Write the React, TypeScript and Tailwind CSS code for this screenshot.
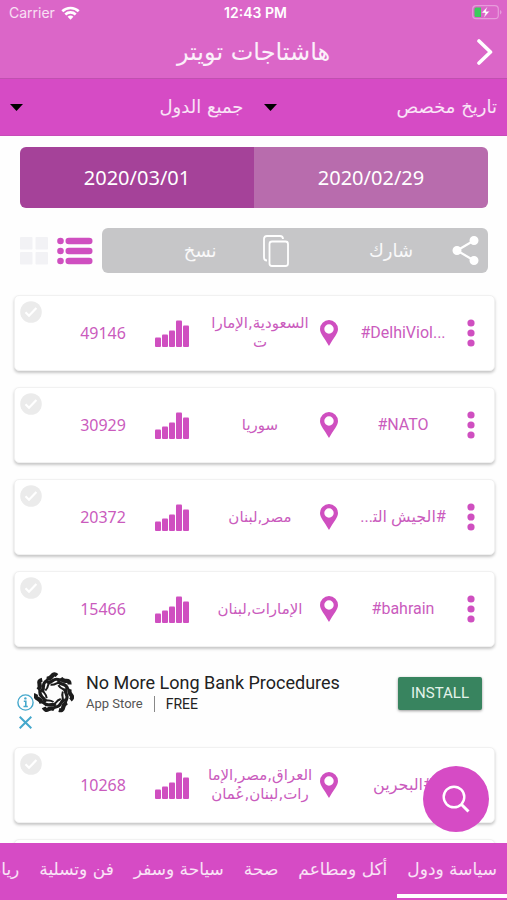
import React, { useState } from "react";

const arabic = "font-['DejaVu_Sans',sans-serif]";

const cardFrame = "h-[76px] rounded-[5px] border border-[#f1f1f1] bg-white shadow-[0_2px_3px_rgba(0,0,0,0.22)]";

type Hashtag = { tag: string; countries: string; count: string };

const beforeAd: Hashtag[] = [
  { tag: "#DelhiViol...", countries: "السعودية,الإمارا\nت", count: "49146" },
  { tag: "#NATO", countries: "سوريا", count: "30929" },
  { tag: "#الجيش الت\u200d...", countries: "مصر,لبنان", count: "20372" },
  { tag: "#bahrain", countries: "الإمارات,لبنان", count: "15466" },
];

const afterAd: Hashtag[] = [
  { tag: "#البحرين", countries: "العراق,مصر,الإما\nرات,لبنان,عُمان", count: "10268" },
];

const categories = ["سياسة ودول", "أكل ومطاعم", "صحة", "سياحة وسفر", "فن وتسلية", "رياضة"];

function StatusBar() {
  return (
    <div dir="ltr" className="grid h-[25px] grid-cols-3 items-center pl-[9px] pr-[5px] font-[Inter,sans-serif] text-sm text-white">
      <span className="flex items-center gap-[6px] text-white/80">
        Carrier
        <svg width="19" height="14" viewBox="0 0 19 14" fill="none" stroke="#fff" strokeWidth="2.6">
          <path d="M1.3 5.3C5.8.9 13.200.9 17.700 5.300" />
          <path d="M4.300 8.500c2.900-2.800 7.500-2.800 10.400 0" />
          <path d="M6.600 10.700c1.700-1.500 4.100-1.500 5.800 0L9.500 13.800z" fill="#fff" stroke="none" />
        </svg>
      </span>
      <span className="text-center text-sm font-semibold whitespace-nowrap">12:43 PM</span>
      <svg className="justify-self-end" width="30" height="15" viewBox="0 0 30 15">
        <rect x="0.700" y="0.700" width="25.600" height="13" rx="3.500" fill="none" stroke="#fff" strokeOpacity=".35" strokeWidth="1.200" />
        <path d="M28 5v4.500c2-.8 2-3.700 0-4.500z" fill="#fff" fillOpacity=".35" />
        <path d="M4 2.500h5v9.500H4a1.500 1.500 0 0 1-1.500-1.500V4A1.500 1.500 0 0 1 4 2.500z" fill="#3ccb5c" />
        <path d="M15.500 1.500L9.500 8h3.700l-1.500 5 6-6.700h-3.700z" fill="#fff" stroke="#db66c8" strokeWidth=".5" />
      </svg>
    </div>
  );
}

function Dropdown({ label, value }: { label: string; value: string }) {
  return (
    <label className="flex flex-1 items-center px-[10px]">
      <select
        aria-label={label}
        className="h-[56px] min-w-0 flex-1 appearance-none bg-transparent text-lg text-white/85 outline-none"
      >
        <option>{value}</option>
      </select>
      <svg width="13" height="7" viewBox="0 0 13 7" className="shrink-0">
        <path d="M0 0h13L6.500 7z" fill="#000" />
      </svg>
    </label>
  );
}

function CheckCircle({ label }: { label: string }) {
  return (
    <label className="mt-[5px] mr-auto ml-[5px] block self-start">
      <input type="checkbox" aria-label={label} className="peer sr-only" />
      <svg width="22" height="22" viewBox="0 0 22 22" className="text-[#ebebeb] peer-checked:text-[#d64bc5]">
        <circle cx="11" cy="11" r="10.800" fill="currentColor" />
        <path d="M5.500 11.300l3.500 3.400 7.400-7.600" fill="none" stroke="#fff" strokeWidth="2.200" />
      </svg>
    </label>
  );
}

function HashtagCard({ item }: { item: Hashtag }) {
  return (
    <li
      className={`grid grid-cols-[46px_minmax(0,100fr)_38px_minmax(0,100fr)_76px_minmax(0,62fr)_57px] items-center justify-items-center text-[#ca5bbd] ${cardFrame}`}
    >
      <button aria-label="المزيد" className="p-2">
        <svg width="8" height="28" viewBox="0 0 8 28" fill="#cf4fc0">
          <circle cx="4" cy="4" r="3.600" />
          <circle cx="4" cy="14" r="3.600" />
          <circle cx="4" cy="24" r="3.600" />
        </svg>
      </button>
      <span dir="auto" className="w-full pl-[10px] text-center font-[Roboto,'DejaVu_Sans',sans-serif] text-base whitespace-nowrap">
        {item.tag}
      </span>
      <svg width="18" height="26" viewBox="0 0 18 26" fill="#cf4fc0">
        <path fillRule="evenodd" d="M9 0a9 9 0 0 1 9 9c0 4.500-4.500 9-9 17C4.500 18 0 13.500 0 9a9 9 0 0 1 9-9zm0 4.300a4.700 4.700 0 1 0 0 9.400 4.700 4.700 0 0 0 0-9.400z" />
      </svg>
      <span className="text-center text-[15px] leading-[19px] whitespace-pre">{item.countries}</span>
      <svg width="34" height="27" viewBox="0 0 34 27" fill="#cf4fc0">
        <rect x="0" y="17.500" width="6" height="9.500" rx="1" />
        <rect x="7" y="14.500" width="6" height="12.500" rx="1" />
        <rect x="14" y="10.500" width="6" height="16.500" rx="1" />
        <rect x="21" y="0.500" width="6" height="26.500" rx="1" />
        <rect x="28" y="5.500" width="6" height="21.500" rx="1" />
      </svg>
      <span className="font-['Noto_Sans',sans-serif] text-base">{item.count}</span>
      <CheckCircle label={item.tag} />
    </li>
  );
}

function AdBanner() {
  return (
    <li dir="ltr" className="-my-4 flex h-[100px] items-center pr-[13px] pb-[8px] pl-[3px]">
      <div className="flex w-[17px] flex-col items-center gap-[5px] self-end pb-[10px]">
        <button aria-label="Ad information" className="block">
          <svg width="17" height="17" viewBox="0 0 17 17" fill="none" stroke="#45a8cc">
            <circle cx="8.500" cy="8.500" r="7.600" strokeWidth="1.400" />
            <path d="M6.800 7.200h2v5M6.500 12.500h4.300" strokeWidth="1.600" />
            <circle cx="8.400" cy="4.400" r="1.200" fill="#45a8cc" stroke="none" />
          </svg>
        </button>
        <button aria-label="Close ad" className="block">
          <svg width="13" height="13" viewBox="0 0 13 13" stroke="#45a8cc" strokeWidth="2">
            <path d="M.7.7l11.600 11.600M12.300.7L.7 12.300" />
          </svg>
        </button>
      </div>
      <svg width="40" height="42" viewBox="-20 -21 40 42" fill="none" stroke="#1c1c1c">
        {[0, 51.43, 102.86, 154.29, 205.71, 257.14, 308.57].map((a) => (
          <g key={a} transform={`rotate(${a})`}>
            <path d="M-7.500 -14.500Q-4 -14 -2 -17T3 -17.500" strokeWidth="4.200" />
            <path d="M-7 -10.800Q-3.500 -10.500 -1 -12.600T6 -13" strokeWidth="3.200" />
            <path d="M-3.500 -8.300Q0 -8 2 -9.300T7.500 -9" strokeWidth="2" />
          </g>
        ))}
      </svg>
      <div className="ml-[12px] flex-1 font-[Roboto,sans-serif] whitespace-nowrap text-[#222]">
        <p className="text-lg leading-[22px]">No More Long Bank Procedures</p>
        <p className="flex items-center text-sm leading-5">
          <span className="text-[13px] text-[#555]">App Store</span>
          <span className="mx-[11px] h-4 w-px bg-[#888]" />
          FREE
        </p>
      </div>
      <button className="h-[33px] w-[84px] rounded-[2px] bg-[#38845f] font-[Roboto,sans-serif] text-[15px] text-[#e3f3ea] shadow-[0_1px_3px_rgba(0,0,0,0.4)]">
        INSTALL
      </button>
    </li>
  );
}

export default function App() {
  const [date, setDate] = useState("2020/03/01");
  const [category, setCategory] = useState(categories[0]);

  return (
    <div dir="rtl" lang="ar" className={`relative flex h-screen flex-col overflow-hidden bg-[#fefefe] ${arabic}`}>
      <header className="shrink-0">
        <div className="border-b border-[#c050b0] bg-[#db66c8]">
          <StatusBar />
          <div className="grid h-[53px] grid-cols-[40px_1fr_40px] items-center">
            <button aria-label="رجوع" className="justify-self-start pr-[14px]">
              <svg width="16" height="26" viewBox="0 0 16 26" fill="none" stroke="#fff" strokeWidth="3.600" strokeLinecap="round" strokeLinejoin="round">
                <path d="M2 2l11.500 11L2 24" />
              </svg>
            </button>
            <h1 className="text-center text-2xl text-white/90">هاشتاجات تويتر</h1>
          </div>
        </div>
        <div className="flex border-b border-[#c84bb8] bg-[#d64bc5]">
          <Dropdown label="التاريخ" value="تاريخ مخصص" />
          <Dropdown label="الدولة" value="جميع الدول" />
        </div>
      </header>

      <main className="min-h-0 flex-1 overflow-y-auto [scrollbar-width:none]">
        <div className="mr-[19px] ml-5 mt-[11px] flex h-[61px] overflow-hidden rounded-[6px] font-['Noto_Sans',sans-serif] text-xl text-white">
          {["2020/02/29", "2020/03/01"].map((d) => (
            <button
              key={d}
              onClick={() => setDate(d)}
              className={`flex-1 ${date === d ? "bg-[#a54299]" : "bg-[#b86cad]"}`}
            >
              {d}
            </button>
          ))}
        </div>

        <div className="mr-[19px] ml-5 mt-5 flex items-center">
          <div className="flex h-[45px] flex-1 items-center rounded-[6px] bg-[#c6c6c8] text-lg text-white/90">
            <button className="flex flex-1 items-center pr-[9px]">
              <svg width="27" height="29" viewBox="0 0 27 29" fill="#fff" stroke="#fff" strokeWidth="2.200">
                <path d="M22 4.500L5 14.500l17 10" fill="none" />
                <circle cx="22" cy="4.500" r="3.400" />
                <circle cx="5" cy="14.500" r="3.400" />
                <circle cx="22" cy="24.500" r="3.400" />
              </svg>
              <span className="pr-[39px]">شارك</span>
            </button>
            <button className="flex flex-1 items-center pr-[4px]">
              <svg width="26" height="32" viewBox="0 0 26 32" fill="none" stroke="#fff" strokeWidth="1.800">
                <rect x="6.500" y="6.500" width="18.500" height="24.500" rx="2.500" />
                <path d="M4 25.500q-3 0-3-3V4q0-3 3-3h13q3 0 3 3" />
              </svg>
              <span className="pr-[46px]">نسخ</span>
            </button>
          </div>
          <button aria-label="قائمة" className="mr-[9px]">
            <svg width="36" height="28" viewBox="0 0 36 28" fill="#cf4fc0">
              {[4, 14, 24].map((y) => (
                <g key={y}>
                  <circle cx="3.500" cy={y} r="3.300" />
                  <rect x="8.500" y={y - 3.3} width="27" height="6.600" rx="3.300" />
                </g>
              ))}
            </svg>
          </button>
          <button aria-label="شبكة" className="mr-[9px]">
            <svg width="28" height="28" viewBox="0 0 28 28" fill="#f2f2f5">
              <rect width="12.500" height="12.500" rx="1" />
              <rect x="15.500" width="12.500" height="12.500" rx="1" />
              <rect y="15" width="12.500" height="12.500" rx="1" />
              <rect x="15.500" y="15" width="12.500" height="12.500" rx="1" />
            </svg>
          </button>
        </div>

        <ul className="mt-[22px] mr-[12px] ml-[14px] flex flex-col gap-4">
          {beforeAd.map((item) => (
            <HashtagCard key={item.tag} item={item} />
          ))}
          <AdBanner />
          {afterAd.map((item) => (
            <HashtagCard key={item.tag} item={item} />
          ))}
          <li aria-hidden="true" className={cardFrame} />
        </ul>
      </main>

      <nav className="flex h-[57px] shrink-0 overflow-hidden bg-[#d64bc5]">
        {categories.map((c) => (
          <button
            key={c}
            onClick={() => setCategory(c)}
            className={`mb-[2px] shrink-0 border-b-4 px-[10px] pt-[2px] text-[17px] whitespace-nowrap text-white/85 ${category === c ? "border-white" : "border-transparent"}`}
          >
            {c}
          </button>
        ))}
      </nav>

      <button aria-label="بحث" className="absolute right-[18px] bottom-[68px] flex size-[66px] items-center justify-center rounded-full bg-[#d64bc5]">
        <svg width="28" height="28" viewBox="0 0 28 28" fill="none" stroke="#fff" strokeWidth="2.400">
          <circle cx="12" cy="12" r="10.300" />
          <path d="M19 19l7.500 7.500" strokeWidth="3" />
        </svg>
      </button>
    </div>
  );
}
